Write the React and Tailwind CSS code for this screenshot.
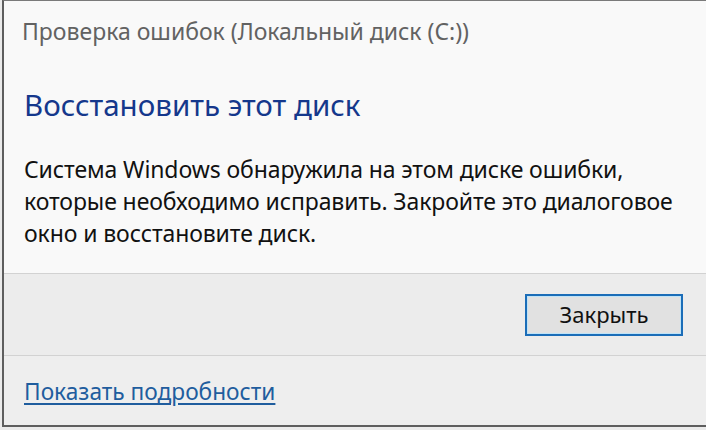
export default function App() {
  const font = { fontFamily: '"Noto Sans", "Open Sans", sans-serif' };
  return (
    <div className="w-[706px] h-[430px] bg-[#ebebeb] overflow-hidden" style={font}>
      <div className="ml-[2px] h-[427px] border-l-2 border-t border-b-2 border-[#5e5e5e] border-t-[#7a7a7a] flex flex-col">
        <div className="h-[273px] bg-[#f9f9f9] border-b border-[#d2d2d2] pl-[18px] pr-2">
          <div className="pt-[14px] text-[23px] leading-[32px] text-[#626262] whitespace-nowrap">
            Проверка ошибок (Локальный диск (C:))
          </div>
          <div className="mt-[40px] text-[29.5px] leading-[36px] text-[#15388c] pl-[2px] whitespace-nowrap">
            Восстановить этот диск
          </div>
          <div className="mt-[30px] pl-[2px] text-[23px] leading-[32px] text-[#111] tracking-[-0.1px] whitespace-nowrap">
            Система Windows обнаружила на этом диске ошибки,
            <br />
            которые необходимо исправить. Закройте это диалоговое
            <br />
            окно и восстановите диск.
          </div>
        </div>
        <div className="h-[82px] bg-[#ececec] border-b border-[#d2d2d2] flex items-center justify-end pr-[23px]">
          <button className="w-[158px] h-[42px] border-2 border-[#1b6db8] bg-[#e1e1e1] shadow-[inset_0_0_0_1px_#bfe3f7] text-[22px] text-[#111] flex items-center justify-center" style={font}>
            Закрыть
          </button>
        </div>
        <div className="flex-1 bg-[#eeeeee] pl-[20px] flex items-center">
          <a href="#" className="text-[22.7px] text-[#1f5d9e] underline underline-offset-[3px] mt-[3px] whitespace-nowrap">
            Показать подробности
          </a>
        </div>
      </div>
    </div>
  );
}
